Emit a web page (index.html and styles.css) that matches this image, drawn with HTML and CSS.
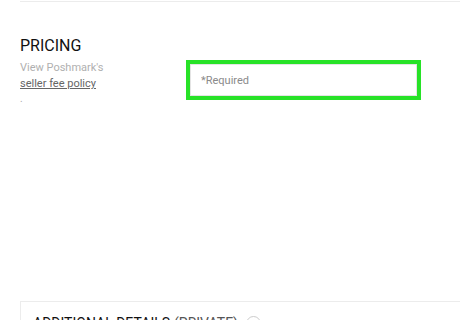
FILE: index.html
```html
<!DOCTYPE html>
<html lang="en">

<head>
    <meta charset="UTF-8" />
    <title>Listing - Pricing</title>
    <link rel="stylesheet" href="styles.css">
</head>

<body>
    <div class="top-rule"></div>

    <section class="pricing">
        <div class="pricing-info">
            <h2>PRICING</h2>
            <p class="hint">View Poshmark's</p>
            <a href="#" class="fee-link">seller fee policy</a>
            <span class="dot">.</span>
        </div>
        <div class="price-field">
            <input type="text" placeholder="*Required">
        </div>
    </section>

    <section class="details">
        <h2>ADDITIONAL DETAILS <span class="private">(PRIVATE)</span>
            <span class="info-icon"></span>
        </h2>
    </section>
</body>
</html>
```
FILE: styles.css
```css
body {
    font-family: Roboto, "Liberation Sans", sans-serif;
    margin: 0;
    background: #fff;
    width: 460px;
    height: 320px;
    overflow: hidden;
}

.top-rule {
    margin-left: 20px;
    height: 1px;
    margin-top: 1px;
    background: #ececec;
}

.pricing {
    display: flex;
    padding: 34px 0 0 20px;
    height: 265px;
}

.pricing-info {
    width: 166px;
}

.pricing-info h2 {
    font-size: 16px;
    font-weight: 400;
    color: #111;
    margin: 0;
    line-height: 20px;
}

.hint {
    font-size: 11px;
    color: #b0b0b0;
    margin: 5px 0 0;
    line-height: 14px;
}

.fee-link {
    display: block;
    font-size: 11px;
    color: #666;
    line-height: 18px;
}

.dot {
    display: block;
    font-size: 10px;
    color: #aaa;
    line-height: 10px;
    margin-top: 1px;
}

.price-field {
    margin-top: 24px;
    width: 235px;
    height: 40px;
    box-sizing: border-box;
    border: 4px solid #27e227;
}

.price-field input {
    width: 100%;
    height: 100%;
    box-sizing: border-box;
    border: 1px solid #e4e4e4;
    padding: 0 0 0 10px;
    font-family: Roboto, "Liberation Sans", sans-serif;
    font-size: 11px;
    outline: none;
}

.price-field input::placeholder {
    color: #8a8a8a;
}

.details {
    margin-left: 20px;
    border-top: 1px solid #ececec;
    border-left: 1px solid #ececec;
    padding: 13px 0 0 12px;
}

.details h2 {
    font-size: 14px;
    font-weight: 400;
    color: #111;
    margin: 0;
    display: flex;
    align-items: center;
    gap: 4px;
}

.private {
    color: #555;
}

.info-icon {
    display: inline-block;
    width: 13px;
    height: 13px;
    border: 1px solid #ccc;
    border-radius: 50%;
    margin-left: 4px;
}
```
